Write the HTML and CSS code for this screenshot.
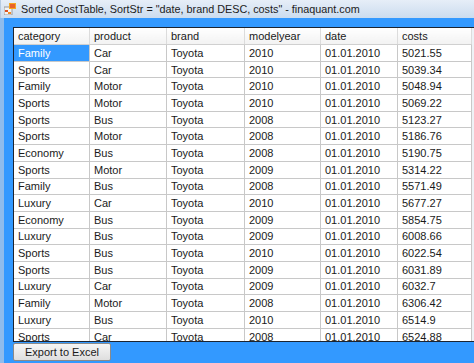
FILE: index.html
```html
<!DOCTYPE html>
<html lang="en">
<head>
    <meta charset="UTF-8">
    <title>Sorted CostTable</title>
    <link rel="stylesheet" href="styles.css">
</head>
<body>
    <div class="titlebar">
        <svg class="appicon" width="12" height="12" viewBox="0 0 12 12">
            <rect x="0" y="4" width="8" height="8" fill="#f3f3f3" stroke="#9a9a9a" stroke-width="1"/>
            <rect x="1" y="7" width="3" height="2" fill="#e0531f"/>
            <rect x="4" y="9" width="3" height="2" fill="#f08a2c"/>
            <rect x="5" y="0" width="7" height="6" fill="#f6a623"/>
            <rect x="6" y="1" width="5" height="4" fill="#e9632b"/>
        </svg>
        <span class="title">Sorted CostTable, SortStr = "date, brand DESC, costs" - finaquant.com</span>
    </div>
    <div class="frame">
        <div class="grid">
            <table>
                <thead>
                    <tr><th>category</th><th>product</th><th>brand</th><th>modelyear</th><th>date</th><th>costs</th></tr>
                </thead>
                <tbody>
                    <tr><td class="selected">Family</td><td>Car</td><td>Toyota</td><td>2010</td><td>01.01.2010</td><td>5021.55</td></tr>
                    <tr><td>Sports</td><td>Car</td><td>Toyota</td><td>2010</td><td>01.01.2010</td><td>5039.34</td></tr>
                    <tr><td>Family</td><td>Motor</td><td>Toyota</td><td>2010</td><td>01.01.2010</td><td>5048.94</td></tr>
                    <tr><td>Sports</td><td>Motor</td><td>Toyota</td><td>2010</td><td>01.01.2010</td><td>5069.22</td></tr>
                    <tr><td>Sports</td><td>Bus</td><td>Toyota</td><td>2008</td><td>01.01.2010</td><td>5123.27</td></tr>
                    <tr><td>Sports</td><td>Motor</td><td>Toyota</td><td>2008</td><td>01.01.2010</td><td>5186.76</td></tr>
                    <tr><td>Economy</td><td>Bus</td><td>Toyota</td><td>2008</td><td>01.01.2010</td><td>5190.75</td></tr>
                    <tr><td>Sports</td><td>Motor</td><td>Toyota</td><td>2009</td><td>01.01.2010</td><td>5314.22</td></tr>
                    <tr><td>Family</td><td>Bus</td><td>Toyota</td><td>2008</td><td>01.01.2010</td><td>5571.49</td></tr>
                    <tr><td>Luxury</td><td>Car</td><td>Toyota</td><td>2010</td><td>01.01.2010</td><td>5677.27</td></tr>
                    <tr><td>Economy</td><td>Bus</td><td>Toyota</td><td>2009</td><td>01.01.2010</td><td>5854.75</td></tr>
                    <tr><td>Luxury</td><td>Bus</td><td>Toyota</td><td>2009</td><td>01.01.2010</td><td>6008.66</td></tr>
                    <tr><td>Sports</td><td>Bus</td><td>Toyota</td><td>2010</td><td>01.01.2010</td><td>6022.54</td></tr>
                    <tr><td>Sports</td><td>Bus</td><td>Toyota</td><td>2009</td><td>01.01.2010</td><td>6031.89</td></tr>
                    <tr><td>Luxury</td><td>Car</td><td>Toyota</td><td>2009</td><td>01.01.2010</td><td>6032.7</td></tr>
                    <tr><td>Family</td><td>Motor</td><td>Toyota</td><td>2008</td><td>01.01.2010</td><td>6306.42</td></tr>
                    <tr><td>Luxury</td><td>Bus</td><td>Toyota</td><td>2010</td><td>01.01.2010</td><td>6514.9</td></tr>
                    <tr><td>Sports</td><td>Car</td><td>Toyota</td><td>2008</td><td>01.01.2010</td><td>6524.88</td></tr>
                </tbody>
            </table>
        </div>
        <button class="export">Export to Excel</button>
    </div>
</body>
</html>
```

FILE: styles.css
```css
body {
    margin: 0;
    width: 474px;
    height: 363px;
    overflow: hidden;
    background-color: #3399ff;
    font-family: "Liberation Sans", Arial, sans-serif;
}
.titlebar {
    display: flex;
    align-items: center;
    height: 18px;
    padding-left: 3px;
    background: linear-gradient(#e6eef8, #cbdcef);
    border-left: 1px solid #b6cbe2;
}
.appicon {
    margin-right: 5px;
}
.title {
    font-size: 10.8px;
    color: #1b1b1b;
    white-space: nowrap;
}
.frame {
    height: 345px;
    padding-left: 9px;
    padding-top: 9px;
    box-sizing: border-box;
    border-left: 4px solid #8fbcec;
}
.grid {
    width: 470px;
    height: 313px;
    overflow: hidden;
    border: 1px solid #1c2430;
    background-color: #eef2f6;
}
table {
    border-collapse: collapse;
    table-layout: fixed;
    width: 452px;
    font-size: 11px;
    color: #1a1a1a;
}
th {
    height: 16px;
    padding: 0 0 0 4px;
    text-align: left;
    font-weight: normal;
    background: linear-gradient(#ffffff, #f2f2f2);
    border-right: 1px solid #dcdcdc;
    border-bottom: 1px solid #d0d0d0;
    white-space: nowrap;
}
th:nth-child(1) { width: 71px; }
th:nth-child(2) { width: 72px; }
th:nth-child(3) { width: 73px; }
th:nth-child(4) { width: 71px; }
th:nth-child(5) { width: 72px; }
th:nth-child(6) { width: 69px; }
td {
    height: 15.7px;
    padding: 0 0 0 4px;
    background-color: #ffffff;
    border-right: 1px solid #c8c8c8;
    border-bottom: 1px solid #c8c8c8;
    white-space: nowrap;
    overflow: hidden;
}
td.selected {
    background-color: #3399ff;
    color: #ffffff;
}
.export {
    display: block;
    margin-top: 1px;
    width: 98px;
    height: 18px;
    padding: 0;
    font-family: "Liberation Sans", Arial, sans-serif;
    font-size: 11px;
    color: #1a1a1a;
    background: linear-gradient(#f6f6f6, #dedede);
    border: 1px solid #8a8a8a;
    border-radius: 2px;
}
```
